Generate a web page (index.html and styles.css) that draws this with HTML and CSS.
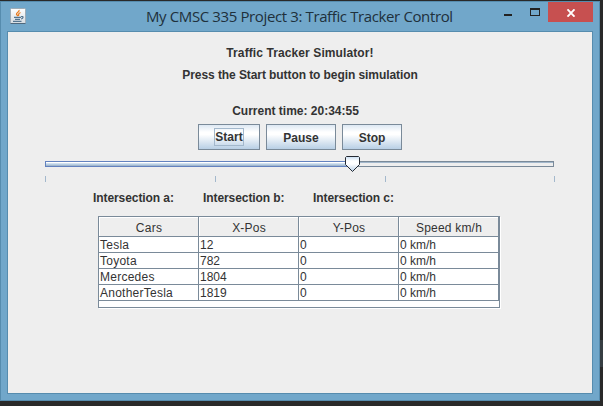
FILE: index.html
```html
<!DOCTYPE html>
<html lang="en">
<head>
<meta charset="utf-8">
<title>Traffic Tracker Control</title>
<link rel="stylesheet" href="styles.css">
</head>
<body>
<div class="window">
  <header class="titlebar">
    <svg class="app-icon" width="16" height="16" viewBox="0 0 16 16">
      <defs><linearGradient id="tile" x2="0" y2="1"><stop stop-color="#fff"/><stop offset="1" stop-color="#d5dce2"/></linearGradient></defs>
      <rect x=".5" y=".5" width="15" height="15" rx="1" fill="url(#tile)" stroke="#9eabb5"/>
      <path d="M.5 15.5h15" stroke="#50687c"/>
      <path d="M9 2C10 4 6 4.500 6.500 6.500L8 8M10.500 4.500C7.500 5.500 9 6.500 8.500 8" fill="none" stroke="#e87b1e" stroke-width="1.300"/>
      <path d="M4 9.300h7M5 11.300h5M3 13.300h8.500M11 8.600c3-.6 2.500 1.900 0 2.400" fill="none" stroke="#54758f" stroke-width="1.200"/>
    </svg>
    <h1 class="title">My CMSC 335 Project 3: Traffic Tracker Control</h1>
    <div class="controls">
      <span class="minimize"></span>
      <span class="maximize"></span>
      <span class="close"><svg width="10" height="8" viewBox="0 0 10 8"><path d="M1.500 .3L8.500 7.700M8.500 .3L1.500 7.700" stroke="#fff" stroke-width="1.800"/></svg></span>
    </div>
  </header>
  <main class="client">
    <p class="line heading"><span>Traffic Tracker Simulator!</span></p>
    <p class="line hint"><span>Press the Start button to begin simulation</span></p>
    <p class="line time"><span>Current time: 20:34:55</span></p>
    <div class="buttons">
      <button class="start"><span class="focus">Start</span></button>
      <button class="pause">Pause</button>
      <button class="stop">Stop</button>
    </div>
    <div class="slider">
      <div class="track"><div class="fill"></div></div>
      <svg class="thumb" width="15" height="16" viewBox="0 0 15 16">
        <defs><linearGradient id="thumb" x2="0" y2="1"><stop stop-color="#c8ddf2"/><stop offset=".3" stop-color="#fff"/><stop offset=".5" stop-color="#fff"/><stop offset="1" stop-color="#b8cfe5"/></linearGradient></defs>
        <path d="M1.500 .5h12l1 1v7L7.500 15.500 .5 8.500v-7z" fill="url(#thumb)" stroke="#252a33"/>
      </svg>
      <div class="ticks"><i></i><i></i><i></i><i></i></div>
    </div>
    <div class="intersections"><span>Intersection a:</span><span>Intersection b:</span><span>Intersection c:</span></div>
    <div class="table">
      <div class="row head"><span>Cars</span><span>X-Pos</span><span>Y-Pos</span><span>Speed km/h</span></div>
      <div class="row"><span>Tesla</span><span>12</span><span>0</span><span>0 km/h</span></div>
      <div class="row"><span>Toyota</span><span>782</span><span>0</span><span>0 km/h</span></div>
      <div class="row"><span>Mercedes</span><span>1804</span><span>0</span><span>0 km/h</span></div>
      <div class="row"><span>AnotherTesla</span><span>1819</span><span>0</span><span>0 km/h</span></div>
    </div>
  </main>
</div>
</body>
</html>
```
FILE: styles.css
```css
* { box-sizing: border-box; }
body {
  margin: 0;
  padding-top: 1px;
  height: 406px;
  overflow: hidden;
  background: linear-gradient(#363e42, #363e42) 600px 340px / 3px 27px no-repeat, #292929;
  font: bold 12px/14px "Liberation Sans", Arial, sans-serif;
  color: #333;
}
.window {
  width: 600px;
  height: 400px;
  border: 1px solid #568cae;
  background: #71a7ca;
  padding: 0 6px;
}
.titlebar { display: flex; height: 29px; }
.app-icon { margin: 6px 0 0 3px; flex: none; }
.title {
  margin: 4px 0 0 120px;
  width: 308px;
  font: 15px/20px "Open Sans", "Noto Sans", sans-serif;
  letter-spacing: -0.38px;
  white-space: nowrap;
  color: #20303b;
}
.controls { display: flex; margin-left: auto; }
.minimize { width: 8px; height: 2px; margin: 12px 18px 0 0; background: #222; }
.maximize { width: 10px; height: 8px; margin: 6px 8px 0 0; border: 1px solid #222; border-top-width: 2px; }
.close { display: flex; justify-content: center; width: 45px; height: 20px; padding-top: 7px; background: #c75050; }
.client {
  width: 586px;
  height: 363px;
  border: 1px solid #568cae;
  background: #eee;
  padding-top: 14px;
}
.line { margin: 0; height: 14px; text-align: center; white-space: nowrap; }
.heading, .hint { width: 584px; }
.heading { letter-spacing: 0.1px; }
.hint { margin-top: 8px; letter-spacing: -0.08px; }
.time { width: 575px; margin-top: 22px; }
.buttons { display: flex; gap: 6px; margin: 6px 0 0 190px; }
.buttons button {
  height: 26px;
  padding: 1px 0 0;
  border: 1px solid #7a8a99;
  background: linear-gradient(#dde8f3 0, #fff 30%, #fff 40%, #b8cfe5 100%);
  font: inherit;
  color: #333;
}
.buttons .start { width: 62px; padding: 0; }
.pause { width: 70px; }
.stop { width: 60px; }
.focus { display: inline-block; width: 30px; height: 18px; border: 1px solid #a3b8cc; line-height: 17px; white-space: nowrap; }
.slider { position: relative; width: 510px; height: 32px; margin-left: 37px; padding-top: 11px; }
.track { width: 509px; height: 6px; border: 1px solid #7a8a99; box-shadow: inset 0 1px #a3b8cc; }
.fill { width: 306px; height: 6px; margin: -1px; border: 1px solid #6382bf; background: linear-gradient(#fff 0 25%, #d2e1ef 25% 50%, #b8cfe5 50% 75%, #a3b8cc 75%); }
.thumb { position: absolute; left: 300px; top: 6px; }
.ticks { display: grid; grid-template-columns: 170px 170px 169px 1px; margin-top: 9px; }
.ticks i { width: 1px; height: 6px; background: #a3b8cc; }
.intersections { display: flex; margin: 9px 0 0 85px; letter-spacing: -0.08px; }
.intersections span { width: 110px; }
.table {
  width: 402px;
  height: 92px;
  margin: 11px 0 0 90px;
  border: 1px solid #7a8a99;
  background: #fff;
  box-shadow: 1px 1px #fff;
  font-weight: normal;
}
.row { display: grid; grid-template: 16px / repeat(4, 100px); line-height: 17px; }
.row span { padding-left: 1px; border: solid #7a8a99; border-width: 0 1px 1px 0; white-space: nowrap; }
.row span:first-child { letter-spacing: 0.25px; }
.head { grid-template-rows: 20px; line-height: 22px; text-align: center; letter-spacing: 0.2px; }
.head span { padding: 0 0 0 1px; background: #eee; box-shadow: inset 1px 1px #fff; }
```
